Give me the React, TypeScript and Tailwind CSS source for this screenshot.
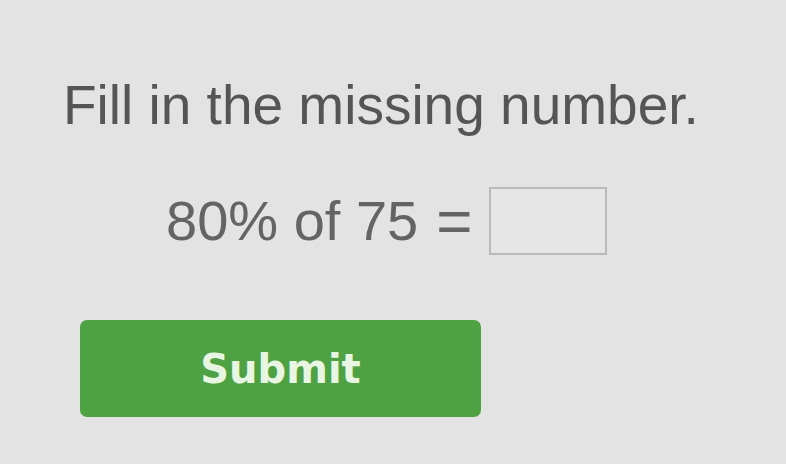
import React from "react";

export default function App() {
  return (
    <div
      className="w-[786px] h-[464px] bg-[#e3e3e3] overflow-hidden pt-[78px] pl-[63px]"
      style={{ fontFamily: '"Liberation Sans", Arial, sans-serif' }}
    >
      <div className="text-[55px] leading-[55px] text-[#555555]">
        Fill in the missing number.
      </div>
      <div className="mt-[54px] ml-[103px] flex items-center h-[68px]">
        <span className="text-[56px] leading-[56px] text-[#646464] whitespace-pre">80% of 75</span>
        <span className="ml-[18px] text-[62px] leading-[56px] text-[#646464]">=</span>
        <div className="ml-[17px] w-[118px] h-[68px] border-2 border-[#b9b9b9] bg-[#e6e6e6]" />
      </div>
      <button
        className="mt-[65px] ml-[17px] w-[401px] h-[97px] rounded-[7px] bg-[#4fa243] flex items-center justify-center text-[#e8f5e2] font-bold text-[40px]"
        style={{ fontFamily: '"DejaVu Sans", Verdana, sans-serif' }}
      >
        Submit
      </button>
    </div>
  );
}
